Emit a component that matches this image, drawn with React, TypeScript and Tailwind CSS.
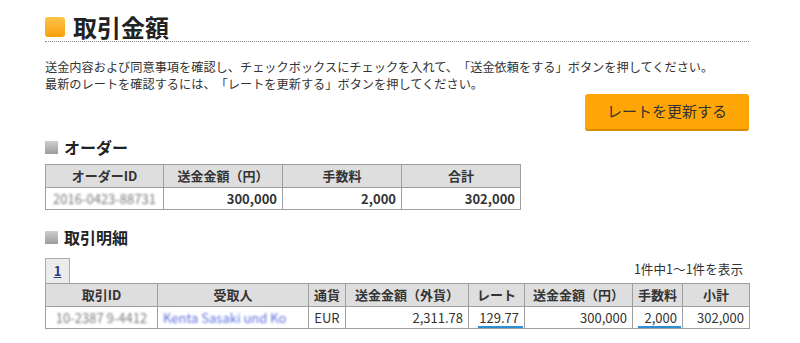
import React from 'react';

const th = 'border border-[#9e9e9e] bg-[#dedede] font-bold text-center h-[23px] p-0';
const td = 'border border-[#9e9e9e] h-[22px] p-0 pr-[5px] text-right';

function SectionHeading({ label }: { label: string }) {
  return (
    <h2 className="flex items-center gap-[6px] h-[20px] text-[16px] font-bold text-[#222]">
      <span className="w-[13px] h-[13px] bg-gradient-to-b from-[#cfcfcf] to-[#9c9c9c]" />
      {label}
    </h2>
  );
}

export default function App() {
  return (
    <div className="w-[800px] h-[343px] bg-white text-[#333] font-['Noto_Sans_CJK_JP',sans-serif] [text-spacing-trim:space-all] overflow-hidden">
      <div className="ml-[45px] w-[704px]">
        {/* Title */}
        <h1 className="mt-[13px] h-[29px] flex items-center gap-[8px] text-[24px] font-bold text-[#222] border-b border-dotted border-[#8a8a8a] pb-[1px]">
          <span className="w-[20px] h-[20px] rounded-[3px] bg-gradient-to-b from-[#ffc445] to-[#f6a000]" />
          取引金額
        </h1>

        <p className="mt-[17px] text-[12.2px] leading-[17px]">
          送金内容および同意事項を確認し、チェックボックスにチェックを入れて、「送金依頼をする」ボタンを押してください。
          <br />
          最新のレートを確認するには、「レートを更新する」ボタンを押してください。
        </p>

        <div className="mt-[1px] flex justify-end">
          <button className="w-[164px] h-[37px] rounded-[3px] bg-[#ffa506] border-b-2 border-[#d98a00] text-[15px] text-[#333]">
            レートを更新する
          </button>
        </div>

        {/* Order */}
        <div className="mt-[6px]">
          <SectionHeading label="オーダー" />
        </div>
        <table className="mt-[7px] w-[475px] table-fixed border-collapse text-[13px]">
          <thead>
            <tr>
              <th className={`${th} w-[118px]`}>オーダーID</th>
              <th className={`${th} w-[119px]`}>送金金額（円）</th>
              <th className={`${th} w-[119px]`}>手数料</th>
              <th className={`${th} w-[119px]`}>合計</th>
            </tr>
          </thead>
          <tbody>
            <tr className="font-bold">
              <td className="border border-[#9e9e9e] h-[22px] p-0 text-center">
                <span className="inline-block blur-[1.2px] text-[#7a7a7a] font-normal">2016-0423-88731</span>
              </td>
              <td className={td}>300,000</td>
              <td className={td}>2,000</td>
              <td className={td}>302,000</td>
            </tr>
          </tbody>
        </table>

        {/* Details */}
        <div className="mt-[17px]">
          <SectionHeading label="取引明細" />
        </div>
        <div className="mt-[11px] flex items-end justify-between">
          <div className="w-[25px] h-[25px] bg-[#ececec] border border-b-0 border-[#aaa] flex items-center justify-center">
            <span className="text-[13px] font-bold text-[#2b3a8f] underline">1</span>
          </div>
          <span className="mb-[6px] mr-[6px] text-[12.6px] leading-[16px]">1件中1〜1件を表示</span>
        </div>
        <table className="w-[704px] table-fixed border-collapse text-[13px]">
          <thead>
            <tr>
              <th className={`${th} w-[112px]`}>取引ID</th>
              <th className={`${th} w-[151px]`}>受取人</th>
              <th className={`${th} w-[37px]`}>通貨</th>
              <th className={`${th} w-[123px]`}>送金金額（外貨）</th>
              <th className={`${th} w-[56px]`}>レート</th>
              <th className={`${th} w-[108px]`}>送金金額（円）</th>
              <th className={`${th} w-[50px]`}>手数料</th>
              <th className={`${th} w-[67px]`}>小計</th>
            </tr>
          </thead>
          <tbody>
            <tr>
              <td className="border border-[#9e9e9e] h-[22px] p-0 text-center">
                <span className="inline-block blur-[1.2px] text-[#7a7a7a]">10-2387 9-4412</span>
              </td>
              <td className="border border-[#9e9e9e] h-[22px] p-0 pl-[5px] text-left">
                <span className="inline-block blur-[1.2px] text-[#5b6fe0]">Kenta Sasaki und Ko</span>
              </td>
              <td className="border border-[#9e9e9e] h-[22px] p-0 text-center">EUR</td>
              <td className={td}>2,311.78</td>
              <td className="border border-[#9e9e9e] h-[22px] p-0 pr-[1px] text-right">
                <span className="inline-block w-[45px] pr-[4px] leading-[17px] border-b-2 border-[#2b8fd6]">129.77</span>
              </td>
              <td className={td}>300,000</td>
              <td className="border border-[#9e9e9e] h-[22px] p-0 pr-[1px] text-right">
                <span className="inline-block w-[43px] pr-[4px] leading-[17px] border-b-2 border-[#2b8fd6]">2,000</span>
              </td>
              <td className={td}>302,000</td>
            </tr>
          </tbody>
        </table>
      </div>
    </div>
  );
}
